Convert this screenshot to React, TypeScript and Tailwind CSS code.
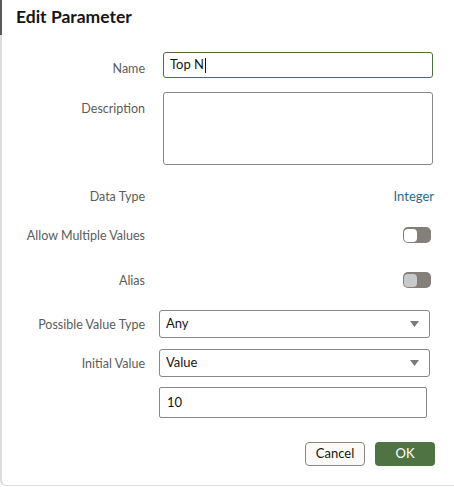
import React from 'react';

function Toggle({ knob }: { knob: string }) {
  return (
    <div className="flex h-[16px] w-[28px] items-center rounded-[5px] bg-[#857f7a] pl-[1px]">
      <div className={`h-[13px] w-[13px] rounded-[4px] ${knob}`} />
    </div>
  );
}

function Caret() {
  return (
    <svg width="9" height="6" viewBox="0 0 9 6" className="mr-[10px]">
      <path d="M0 0h9L4.5 6z" fill="#7a7a7a" />
    </svg>
  );
}

export default function App() {
  return (
    <div
      className="relative h-[486px] w-[454px] rounded-bl-[6px] border-b border-l-2 border-[#dcdcdc] bg-white text-[12.5px] text-[#5b5b5b]"
      style={{ fontFamily: 'Lato, "Noto Sans", sans-serif' }}
    >
      <div className="absolute -left-[2px] top-0 h-[35px] w-[2px] bg-[#5a5a5a]" />
      <h1 className="pl-[14px] pt-[7px] text-[17.5px] leading-[20px] font-bold text-[#161513]">
        Edit Parameter
      </h1>

      <div className="mt-[25px] flex flex-col">
        {/* Name */}
        <div className="flex items-start">
          <div className="w-[143px] pt-[9px] text-right leading-[16px]">Name</div>
          <div className="ml-[18px] flex h-[26px] w-[270px] items-center rounded-[3px] border border-[#4f6f3f] px-[6px] text-[13px] text-[#161513]">
            Top N<span className="ml-[1px] h-[15px] w-[1px] bg-[#161513]" />
          </div>
        </div>

        {/* Description */}
        <div className="mt-[14px] flex items-start">
          <div className="w-[143px] pt-[9px] text-right leading-[16px]">Description</div>
          <div className="ml-[18px] h-[73px] w-[270px] rounded-[3px] border border-[#8a8886]" />
        </div>

        {/* Data Type */}
        <div className="mt-[23px] flex h-[16px] items-center">
          <div className="mt-[2px] w-[143px] text-right">Data Type</div>
          <div className="ml-auto mr-[20px] mt-[2px] text-[13px] text-[#1f6d93]">Integer</div>
        </div>

        {/* Allow Multiple Values */}
        <div className="mt-[23px] flex h-[16px] items-center">
          <div className="mt-[2px] w-[143px] text-right">Allow Multiple Values</div>
          <div className="ml-auto mr-[23px]">
            <Toggle knob="bg-white" />
          </div>
        </div>

        {/* Alias */}
        <div className="mt-[29px] flex h-[16px] items-center">
          <div className="mt-[2px] w-[143px] text-right">Alias</div>
          <div className="ml-auto mr-[23px]">
            <Toggle knob="bg-[#c8c9cb]" />
          </div>
        </div>

        {/* Possible Value Type */}
        <div className="mt-[22px] flex h-[28px] items-center">
          <div className="mt-[2px] w-[143px] text-right">Possible Value Type</div>
          <div className="ml-[14px] flex h-[28px] w-[271px] items-center justify-between rounded-[3px] border border-[#8a8886] pl-[6px] text-[13px] text-[#161513]">
            Any
            <Caret />
          </div>
        </div>

        {/* Initial Value */}
        <div className="mt-[11px] flex h-[28px] items-center">
          <div className="mt-[2px] w-[143px] text-right">Initial Value</div>
          <div className="ml-[14px] flex h-[28px] w-[271px] items-center justify-between rounded-[3px] border border-[#8a8886] pl-[6px] text-[13px] text-[#161513]">
            Value
            <Caret />
          </div>
        </div>

        {/* Value input */}
        <div className="mt-[10px] flex">
          <div className="w-[143px]" />
          <div className="ml-[14px] flex h-[31px] w-[268px] items-center rounded-[2px] border border-[#8a8886] pl-[7px] text-[13px] text-[#161513]">
            10
          </div>
        </div>

        {/* Buttons */}
        <div className="mt-[24px] flex justify-end gap-[10px] pr-[19px]">
          <button className="h-[24px] w-[60px] rounded-[4px] border border-[#8a8886] bg-[#fbfaf8] text-[13px] text-[#161513]">
            Cancel
          </button>
          <button className="h-[24px] w-[60px] rounded-[4px] bg-[#4f7343] text-[13px] text-white">
            OK
          </button>
        </div>
      </div>
    </div>
  );
}
